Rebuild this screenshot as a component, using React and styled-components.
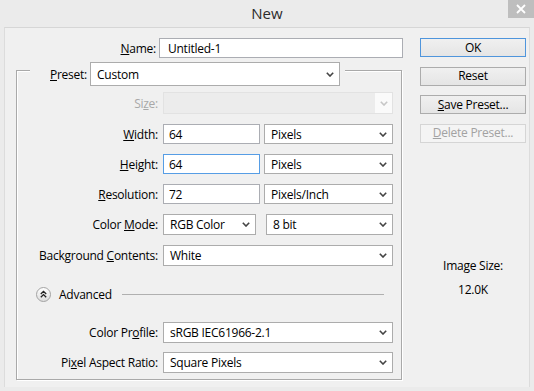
import React from 'react';
import styled, { createGlobalStyle } from 'styled-components';

const GlobalStyle = createGlobalStyle`
	html, body {
		margin: 0;
		padding: 0;
		background: #ebebeb;
	}
	body {
		font-family: "Open Sans", "Noto Sans", sans-serif;
		font-size: 12px;
		letter-spacing: -0.25px;
		color: #000;
	}
`;

const Window = styled.div`
	width: 534px;
	height: 391px;
	display: flex;
	flex-direction: column;
	background: #ebebeb;
	overflow: hidden;
`;

const TitleBar = styled.div`
	height: 27px;
	display: grid;
	grid-template-columns: 1fr auto 1fr;
	flex-shrink: 0;
`;

const Title = styled.div`
	grid-column: 2;
	align-self: center;
	font-size: 15px;
	letter-spacing: 0;
	color: #2b2b2b;
	margin-top: -1px;
`;

const CloseButton = styled.div`
	grid-column: 3;
	justify-self: end;
	width: 26px;
	height: 18px;
	background: #bebebe;
	display: flex;
	align-items: center;
	justify-content: center;
`;

const Client = styled.div`
	flex: 1;
	margin: 0 4px 4px 4px;
	border-top: 1px solid #d6d6d6;
	border-left: 1px solid #dcdcdc;
	border-right: 1px solid #dcdcdc;
	background: #f0f0f0;
	display: flex;
	padding-top: 10px;
`;

const LeftCol = styled.div`
	margin-left: 11px;
	width: 386px;
	flex-shrink: 0;
`;

const RightCol = styled.div`
	margin-left: 18px;
	width: 106px;
	display: flex;
	flex-direction: column;
	gap: 9.5px;
`;

const NameRow = styled.div`
	display: grid;
	grid-template-columns: 140px 244px;
	column-gap: 3px;
	align-items: center;
	height: 20px;
`;

const Label = styled.label`
	text-align: right;
	white-space: nowrap;
	color: ${p => (p.$disabled ? '#a8a8a8' : '#000')};
	u {
		text-decoration: underline;
		text-underline-offset: 1px;
	}
`;

const TextInput = styled.input`
	box-sizing: border-box;
	height: ${p => p.$h || 20}px;
	width: ${p => (p.$w ? p.$w + 'px' : '100%')};
	border: 1px solid ${p => (p.$focused ? '#569de5' : '#abadb3')};
	background: #fff;
	font-family: inherit;
	font-size: 12px;
	letter-spacing: -0.25px;
	padding: 0 0 0 ${p => p.$pad || 5}px;
	margin: 0;
	outline: none;
	color: #000;
`;

const Select = styled.div`
	box-sizing: border-box;
	height: ${p => p.$h || 21}px;
	width: ${p => (p.$w ? p.$w + 'px' : '100%')};
	border: 1px solid #acacac;
	background: #fff;
	display: flex;
	align-items: center;
	padding-left: 6px;
	padding-right: 5px;
	white-space: nowrap;
`;

const SelectText = styled.span`
	flex: 1;
`;

const DisabledSelect = styled.div`
	box-sizing: border-box;
	height: 22px;
	width: 100%;
	border: 1px solid #e2e2e2;
	background: #ececec;
	display: flex;
	justify-content: flex-end;
`;

const DisabledArrow = styled.div`
	width: 17px;
	background: #fafafa;
	display: flex;
	align-items: center;
	justify-content: center;
`;

const GroupBox = styled.div`
	margin-top: 12px;
	box-sizing: border-box;
	width: 386px;
	border: 1px solid #a9a9a9;
	box-shadow: inset 1px 1px 0 #fff, 1px 1px 0 #fff;
	padding-bottom: 6px;
`;

const Legend = styled.div`
	margin-top: -9px;
	margin-left: 13px;
	padding: 0 5px;
	width: fit-content;
	background: #f0f0f0;
	display: flex;
	align-items: center;
	gap: 3px;
`;

const LegendLabel = styled(Label)`
	width: 52px;
`;

const Rows = styled.div`
	display: flex;
	flex-direction: column;
	gap: ${p => p.$gap}px;
	margin-top: ${p => p.$top}px;
`;

const FieldRow = styled.div`
	display: grid;
	grid-template-columns: 141px 230px;
	column-gap: 5px;
	align-items: center;
	height: ${p => p.$h}px;
`;

const Pair = styled.div`
	display: flex;
	justify-content: space-between;
	align-items: center;
`;

const AdvancedRow = styled.div`
	margin-top: 21px;
	height: 15px;
	display: flex;
	align-items: center;
	padding-left: 19px;
	padding-right: 17px;
	gap: 8px;
`;

const AdvancedText = styled.span`
	margin-top: -1px;
`;

const Rule = styled.div`
	flex: 1;
	height: 1px;
	background: #b0b0b0;
	margin-left: 2px;
`;

const Button = styled.div`
	box-sizing: border-box;
	height: 19px;
	border: 1px solid ${p => (p.$default ? '#4f95dc' : p.$disabled ? '#d5d5d5' : '#acacac')};
	background: ${p => (p.$disabled ? '#f4f4f4' : 'linear-gradient(#f0f0f0, #e5e5e5)')};
	color: ${p => (p.$disabled ? '#a2a2a2' : '#000')};
	display: flex;
	align-items: center;
	justify-content: center;
	line-height: 1;
	u {
		text-underline-offset: 1px;
	}
`;

const SizeInfo = styled.div`
	margin-top: 106px;
	display: flex;
	flex-direction: column;
	align-items: center;
	gap: 8px;
	line-height: 16px;
`;

const Chevron = ({ color = '#444' }) => (
	<svg width="8" height="5" viewBox="0 0 8 5">
		<path d="M0.8 0.8 L4 4 L7.2 0.8" fill="none" stroke={color} strokeWidth="1.6" />
	</svg>
);

const AdvancedIcon = () => (
	<svg width="15" height="15" viewBox="0 0 15 15">
		<defs>
			<linearGradient id="adv" x1="0" y1="0" x2="0" y2="1">
				<stop offset="0" stopColor="#ffffff" />
				<stop offset="1" stopColor="#dcdcdc" />
			</linearGradient>
		</defs>
		<circle cx="7.5" cy="7.5" r="7" fill="url(#adv)" stroke="#a3a3a3" />
		<path d="M4.8 7 L7.5 4.3 L10.2 7 M4.8 10.3 L7.5 7.6 L10.2 10.3" fill="none" stroke="#222" strokeWidth="1.3" />
	</svg>
);

const Dropdown = ({ value, w, h }) => (
	<Select $w={w} $h={h}>
		<SelectText>{value}</SelectText>
		<Chevron />
	</Select>
);

export default function App() {
	return (
		<>
			<GlobalStyle />
			<Window>
				<TitleBar>
					<Title>New</Title>
					<CloseButton>
						<svg width="10" height="10" viewBox="0 0 10 10">
							<path d="M1 1 L9 9 M9 1 L1 9" stroke="#fff" strokeWidth="1.8" />
						</svg>
					</CloseButton>
				</TitleBar>
				<Client>
					<LeftCol>
						<NameRow>
							<Label><u>N</u>ame:</Label>
							<TextInput defaultValue="Untitled-1" $pad={8} />
						</NameRow>
						<GroupBox>
							<Legend>
								<LegendLabel><u>P</u>reset:</LegendLabel>
								<Dropdown value="Custom" w={250} h={24} />
							</Legend>
							<Rows $top={6} $gap={10}>
								<FieldRow $h={22}>
									<Label $disabled>Si<u>z</u>e:</Label>
									<DisabledSelect>
										<DisabledArrow><Chevron color="#c6c6c6" /></DisabledArrow>
									</DisabledSelect>
								</FieldRow>
								<FieldRow $h={20}>
									<Label><u>W</u>idth:</Label>
									<Pair>
										<TextInput defaultValue="64" $w={97} />
										<Dropdown value="Pixels" w={129} h={20} />
									</Pair>
								</FieldRow>
								<FieldRow $h={20}>
									<Label><u>H</u>eight:</Label>
									<Pair>
										<TextInput defaultValue="64" $w={97} $focused />
										<Dropdown value="Pixels" w={129} h={20} />
									</Pair>
								</FieldRow>
								<FieldRow $h={20}>
									<Label><u>R</u>esolution:</Label>
									<Pair>
										<TextInput defaultValue="72" $w={97} />
										<Dropdown value="Pixels/Inch" w={129} h={20} />
									</Pair>
								</FieldRow>
								<FieldRow $h={21}>
									<Label>Color <u>M</u>ode:</Label>
									<Pair>
										<Dropdown value="RGB Color" w={93} />
										<Dropdown value="8 bit" w={127} />
									</Pair>
								</FieldRow>
								<FieldRow $h={21}>
									<Label>Background <u>C</u>ontents:</Label>
									<Dropdown value="White" />
								</FieldRow>
							</Rows>
							<AdvancedRow>
								<AdvancedIcon />
								<AdvancedText>Advanced</AdvancedText>
								<Rule />
							</AdvancedRow>
							<Rows $top={20} $gap={9}>
								<FieldRow $h={21}>
									<Label>Color Pr<u>o</u>file:</Label>
									<Dropdown value="sRGB IEC61966-2.1" />
								</FieldRow>
								<FieldRow $h={21}>
									<Label>Pi<u>x</u>el Aspect Ratio:</Label>
									<Dropdown value="Square Pixels" />
								</FieldRow>
							</Rows>
						</GroupBox>
					</LeftCol>
					<RightCol>
						<Button $default>OK</Button>
						<Button>Reset</Button>
						<Button><span><u>S</u>ave Preset...</span></Button>
						<Button $disabled><span><u>D</u>elete Preset...</span></Button>
						<SizeInfo>
							<span>Image Size:</span>
							<span>12.0K</span>
						</SizeInfo>
					</RightCol>
				</Client>
			</Window>
		</>
	);
}
